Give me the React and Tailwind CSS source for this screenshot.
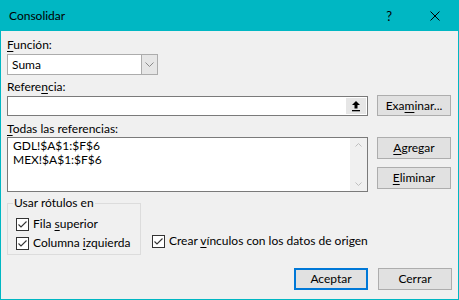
import React from "react";

const font = { fontFamily: '"Segoe UI", Lato, "Noto Sans", sans-serif' };

function Check() {
  return (
    <span className="flex h-[13px] w-[13px] shrink-0 items-center justify-center border border-[#333333] bg-white">
      <svg width="11" height="11" viewBox="0 0 11 11">
        <polyline points="1.5,5.5 4,8 9.5,2.5" fill="none" stroke="#333333" strokeWidth="1.1" />
      </svg>
    </span>
  );
}

function Btn({ children, primary }) {
  return (
    <div
      className={
        "flex h-[22px] w-[74px] items-center justify-center bg-[#e1e1e1] text-[12px] leading-none text-black " +
        (primary ? "border-2 border-[#0078d7]" : "border border-[#adadad]")
      }
    >
      {children}
    </div>
  );
}

export default function App() {
  return (
    <div
      className="flex h-[300px] w-[459px] flex-col border-x border-b border-[#00b7c3] bg-[#f0f0f0] text-[12px] leading-[16px] text-black"
      style={font}
    >
      {/* title bar */}
      <div className="-mx-px flex h-[31px] shrink-0 items-center bg-[#00b7c3] pl-[9px]">
        <span className="text-[12px] text-black">Consolidar</span>
        <span className="ml-auto mr-[38px] text-[13px] text-black">?</span>
        <svg className="mr-[19px]" width="10" height="10" viewBox="0 0 10 10">
          <path d="M0.5 0.5 L9.5 9.5 M9.5 0.5 L0.5 9.5" stroke="#000" strokeWidth="1" />
        </svg>
      </div>

      <div className="flex flex-1 flex-col pl-[6px] pr-[6px]">
        {/* Función */}
        <div className="mt-[6px] h-[16px]">
          <span className="underline underline-offset-2">F</span>unción:
        </div>
        <div className="mt-[1px] flex h-[21px] w-[151px] border border-[#acacac] bg-white">
          <div className="flex flex-1 items-center pl-[4px]">Suma</div>
          <div className="flex w-[16px] items-center justify-center border-l border-[#acacac] bg-[#e6e6e6]">
            <svg width="9" height="6" viewBox="0 0 9 6">
              <polyline points="0.5,0.5 4.5,4.5 8.5,0.5" fill="none" stroke="#8a8a8a" strokeWidth="1" />
            </svg>
          </div>
        </div>

        {/* Referencia */}
        <div className="mt-[4px] h-[16px]">
          Refere<span className="underline underline-offset-2">n</span>cia:
        </div>
        <div className="flex items-start">
          <div className="mt-[1px] flex h-[20px] w-[361px] border border-[#7a7a7a] bg-white">
            <div className="flex-1" />
            <div className="m-[1px] flex w-[20px] items-center justify-center bg-[#e6e6e6]">
              <svg width="8" height="11" viewBox="0 0 8 11">
                <path d="M4 0 L8 4 L5.5 4 L5.5 7.5 L2.5 7.5 L2.5 4 L0 4 Z" fill="#000" />
                <rect x="0" y="9" width="8" height="1.3" fill="#000" />
              </svg>
            </div>
          </div>
          <div className="ml-[9px]">
            <div className="flex h-[21px] w-[74px] items-center justify-center border border-[#adadad] bg-[#e1e1e1]">
              Exa<span className="underline underline-offset-2">m</span>inar...
            </div>
          </div>
        </div>

        {/* Todas las referencias */}
        <div className="mt-[5px] h-[16px]">
          <span className="underline underline-offset-2">T</span>odas las referencias:
        </div>
        <div className="flex items-start">
          <div className="flex h-[55px] w-[361px] border border-[#7a7a7a] bg-white">
            <div className="flex-1 pl-[5px] pt-[1px] leading-[14px]">
              <div>GDL!$A$1:$F$6</div>
              <div>MEX!$A$1:$F$6</div>
            </div>
            <div className="flex w-[17px] flex-col items-center justify-between bg-[#f0f0f0] py-[5px]">
              <svg width="7" height="4" viewBox="0 0 7 4">
                <polyline points="0.5,3.5 3.5,0.5 6.5,3.5" fill="none" stroke="#bfbfbf" strokeWidth="1" />
              </svg>
              <svg width="7" height="4" viewBox="0 0 7 4">
                <polyline points="0.5,0.5 3.5,3.5 6.5,0.5" fill="none" stroke="#bfbfbf" strokeWidth="1" />
              </svg>
            </div>
          </div>
          <div className="ml-[9px] flex flex-col gap-[8px]">
            <Btn>
              <span className="underline underline-offset-2">A</span>gregar
            </Btn>
            <Btn>
              <span className="underline underline-offset-2">E</span>liminar
            </Btn>
          </div>
        </div>

        {/* group + checkbox */}
        <div className="mt-[3px] flex items-end">
          <fieldset className="h-[60px] w-[134px] border border-[#dcdcdc] pl-[8px]">
            <legend className="-ml-[3px] px-[1px] leading-[16px]">Usar rótulos en</legend>
            <div className="mt-[5px] flex items-center gap-[4px]">
              <Check />
              <span>
                Fila <span className="underline underline-offset-2">s</span>uperior
              </span>
            </div>
            <div className="mt-[3px] flex items-center gap-[4px]">
              <Check />
              <span>
                Columna <span className="underline underline-offset-2">i</span>zquierda
              </span>
            </div>
          </fieldset>
          <div className="mb-[6px] ml-[11px] flex items-center gap-[4px]">
            <Check />
            <span>
              Crear <span className="underline underline-offset-2">v</span>ínculos con los datos de origen
            </span>
          </div>
        </div>

        {/* bottom buttons */}
        <div className="mt-[13px] flex justify-end gap-[10px]">
          <Btn primary>Aceptar</Btn>
          <Btn>Cerrar</Btn>
        </div>
      </div>
    </div>
  );
}
